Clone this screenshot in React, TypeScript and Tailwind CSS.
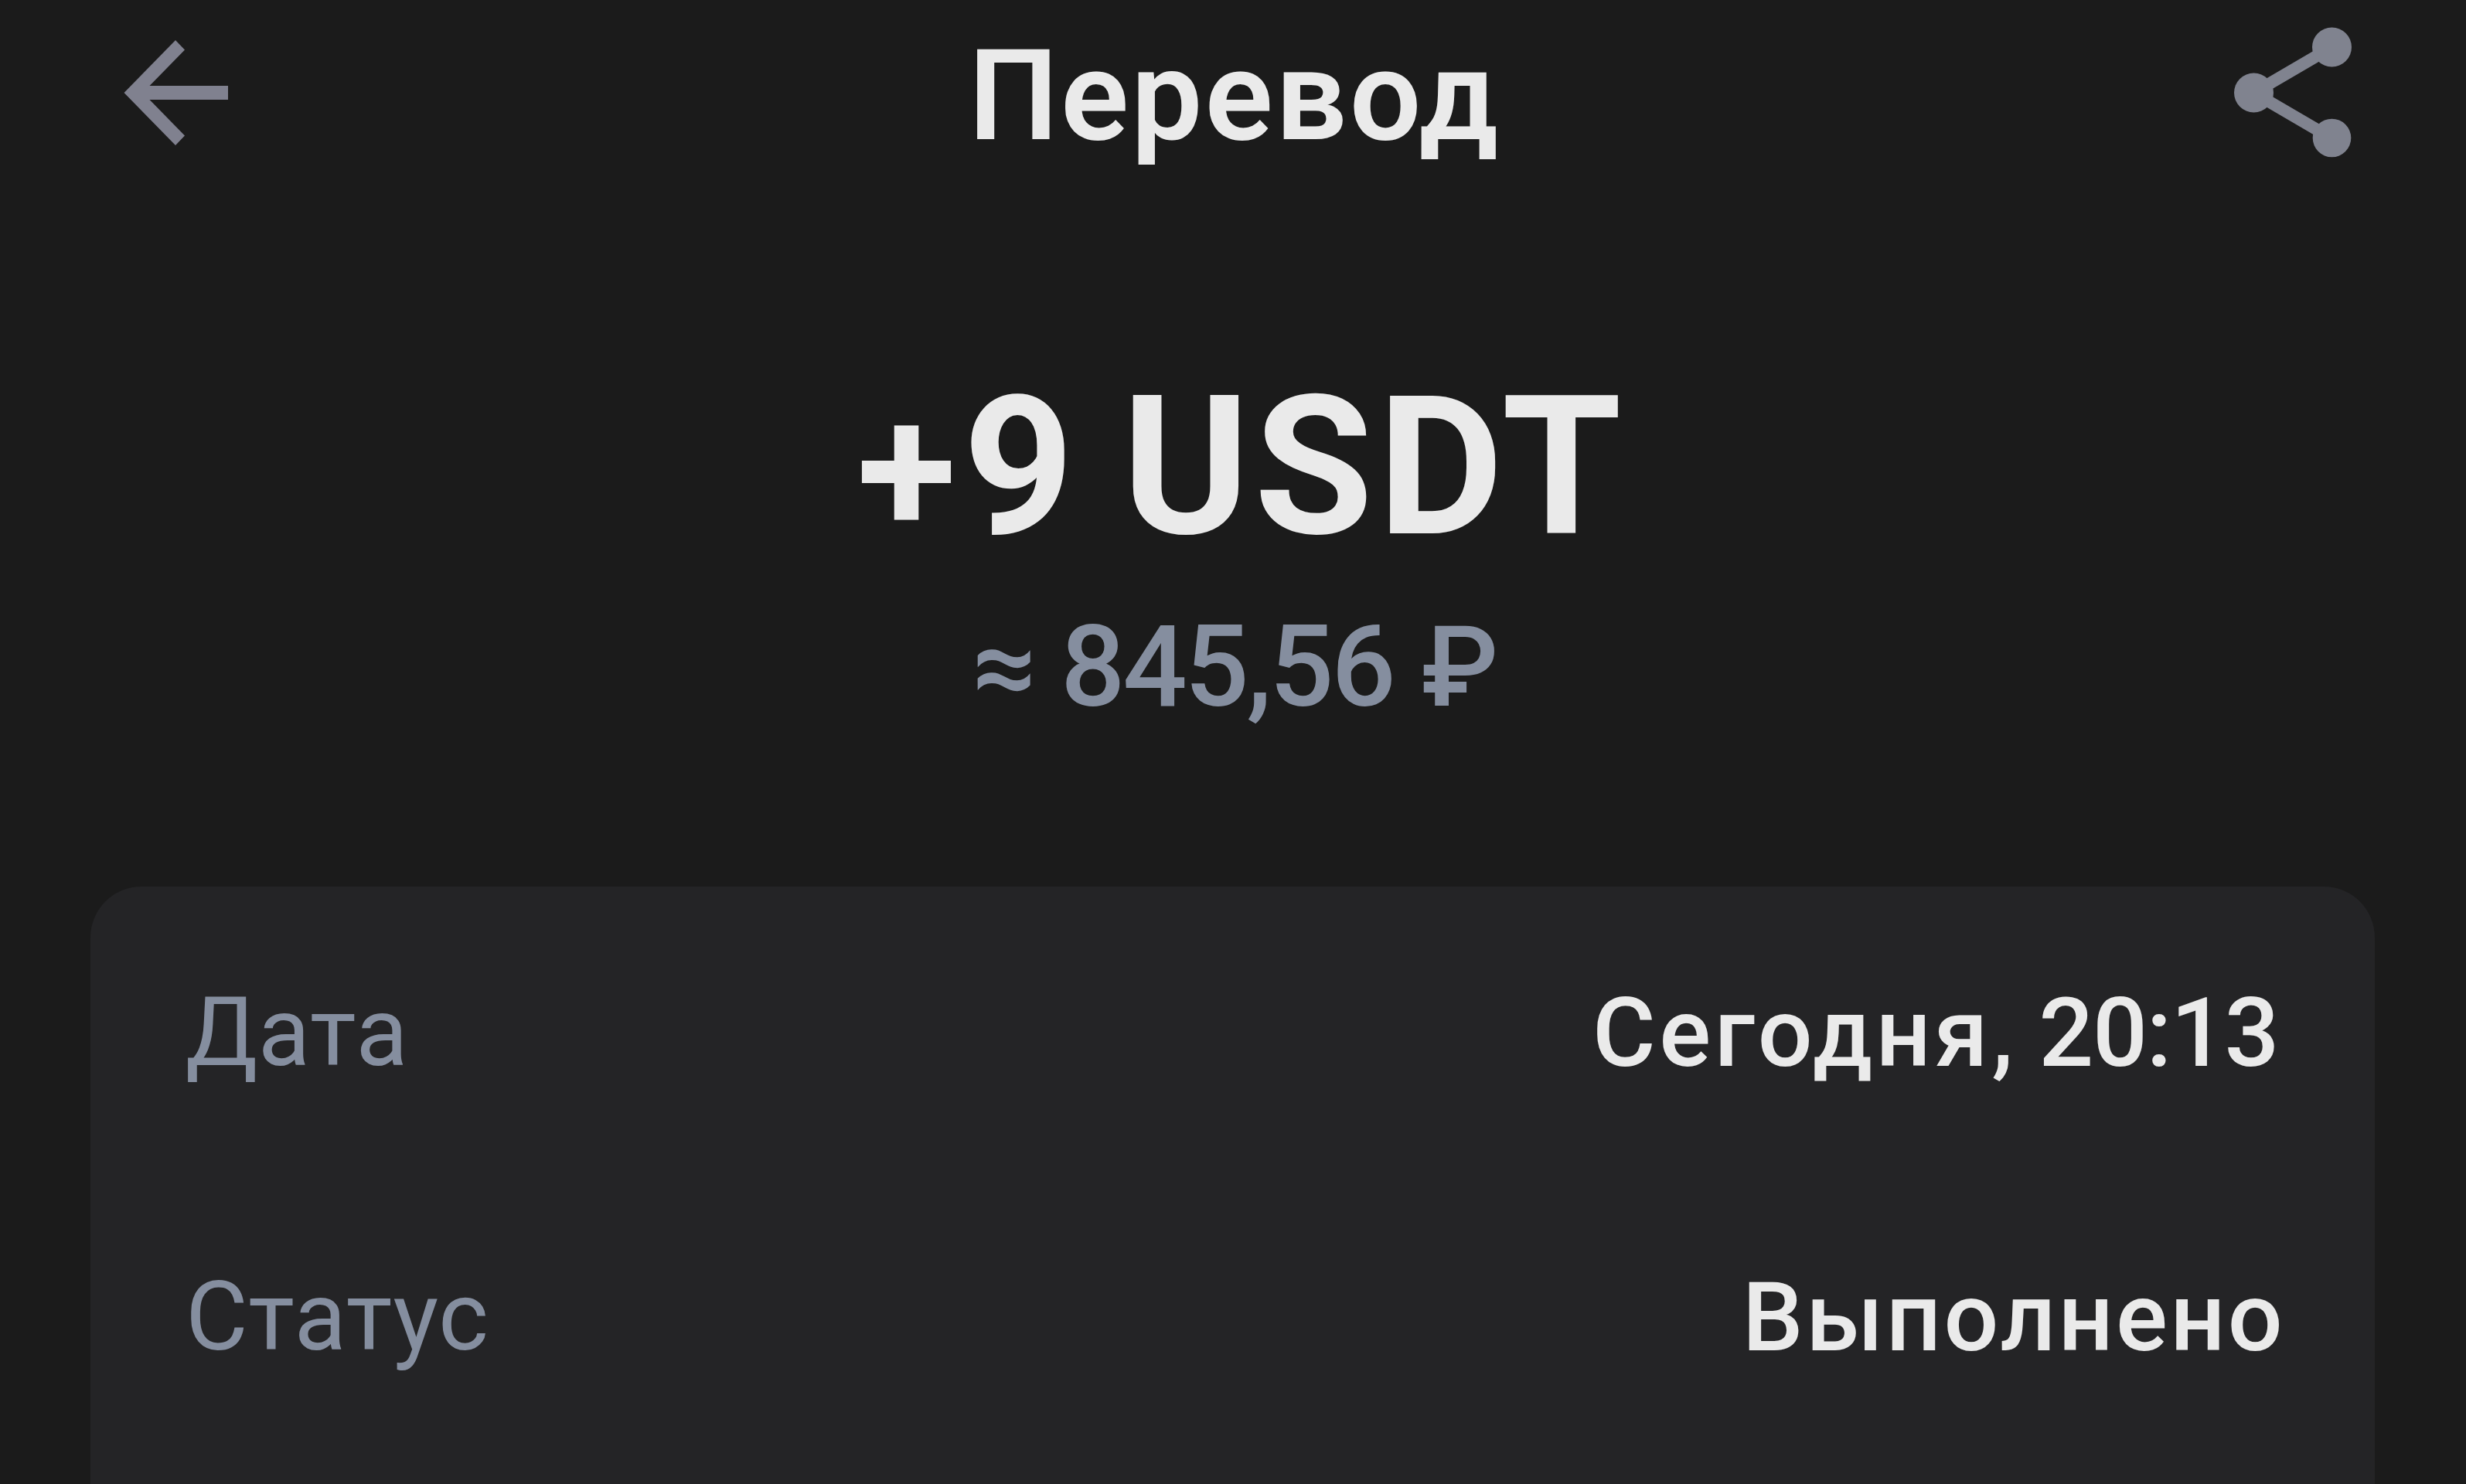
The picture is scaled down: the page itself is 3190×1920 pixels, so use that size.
import React from 'react';

interface DetailRowProps {
    label: string;
    children: React.ReactNode;
}

const BackIcon: React.FC = () => (
    <svg className="h-[136px] w-[136px]" viewBox="0 0 136 136" fill="currentColor">
        <path d="M0.5 68 67 0l12 12.5L33.5 59H135v18H33.5L79 123.5 67 136z" />
    </svg>
);

const ShareIcon: React.FC = () => (
    <svg className="h-[170px] w-[152px]" viewBox="0 0 152 170" fill="currentColor">
        <path d="M126.5 26 25.5 85l101 59" fill="none" stroke="currentColor" strokeWidth="15.5" />
        <circle cx="126.5" cy="26" r="25.5" />
        <circle cx="25.5" cy="85" r="25.5" />
        <circle cx="126.5" cy="143.5" r="24.8" />
    </svg>
);

const DetailRow: React.FC<DetailRowProps> = ({ label, children }) => (
    <div className="flex h-[368px] items-center justify-between">
        <dt className="text-[124px] leading-none tracking-[0.6px] text-[#858e9f]">{label}</dt>
        <dd className="text-[125px] font-medium leading-none">{children}</dd>
    </div>
);

const App: React.FC = () => {
    return (
        <div className="flex h-[1920px] w-[3190px] flex-col overflow-hidden bg-[#1b1b1b] font-[Roboto,sans-serif] whitespace-nowrap text-[#eaeaea]">
            <header className="flex h-60 items-center justify-between pr-[148px] pl-40">
                <button className="text-[#80818f]" aria-label="Назад">
                    <BackIcon />
                </button>
                <h1 className="pt-2 pl-2 text-[164px] font-[650] leading-none tracking-[3px]">Перевод</h1>
                <button className="text-[#80838f]" aria-label="Поделиться">
                    <ShareIcon />
                </button>
            </header>

            {/* Amount and its fiat value */}
            <section className="flex flex-col items-center pt-60">
                <p className="pl-[22px] text-[250px] font-bold leading-none">
                    <span className="text-[236px] tracking-[9px]">+</span>
                    <span>9</span> <span className="tracking-[6px]">USDT</span>
                </p>
                <p className="mt-[60px] pl-1.5 text-[147px] font-medium leading-none text-[#858e9f]">
                    ≈ <span className="-ml-1.5 tracking-[-3.4px]">845,56</span>{' '}
                    <span className="text-[145px]">₽</span>
                </p>
            </section>

            <dl className="mt-[210px] mr-[118px] ml-[117px] flex-1 rounded-t-[66px] bg-[#242426] pt-[5px] pr-[116px] pl-[123px]">
                <DetailRow label="Дата">
                    <span className="tracking-[4.7px]">Сегодня,</span>{' '}
                    <span className="-ml-[3px] pr-[9px] tracking-[-1.5px]">20:13</span>
                </DetailRow>
                <DetailRow label="Статус">
                    <span className="tracking-[3.25px]">Выполнено</span>
                </DetailRow>
            </dl>
        </div>
    );
};

export default App;
